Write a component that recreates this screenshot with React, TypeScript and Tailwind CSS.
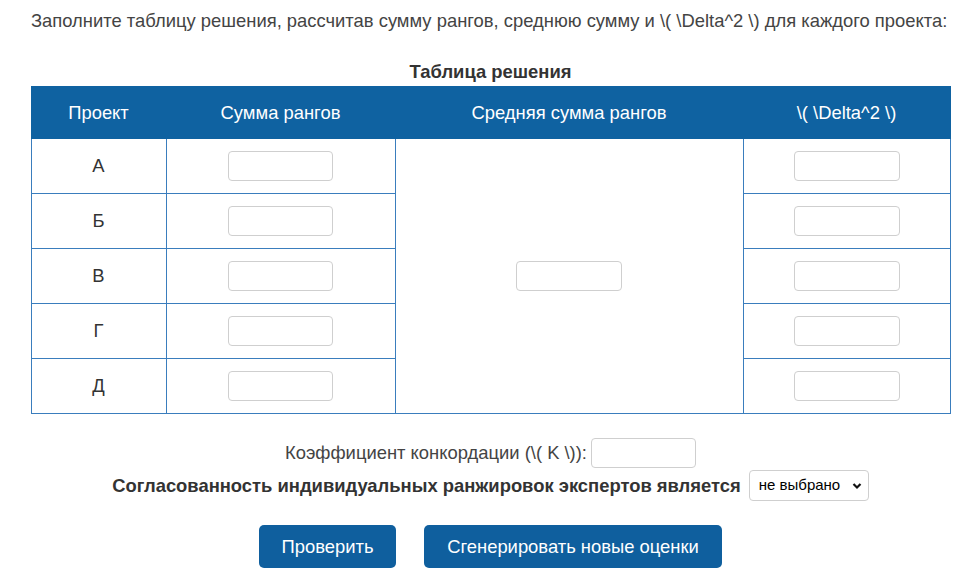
import React from "react";

const rows = ["А", "Б", "В", "Г", "Д"];

function Field({ w = "w-[105px]" }: { w?: string }) {
  return (
    <input
      type="text"
      className={`${w} h-[30px] rounded-[4px] border border-[#cfcfcf] bg-white outline-none`}
    />
  );
}

export default function App() {
  return (
    <div
      className="w-[974px] h-[584px] bg-white text-[#333] overflow-hidden text-[18.4px]"
      style={{ fontFamily: '"Liberation Sans", Arial, sans-serif' }}
    >
      <div className="ml-[31px] w-[919px] flex flex-col items-center">
        <p className="self-start mt-[11px] leading-[20px] text-[#444] whitespace-nowrap">
          Заполните таблицу решения, рассчитав сумму рангов, среднюю сумму и \( \Delta^2 \) для каждого проекта:
        </p>
        <div className="mt-[31px] leading-[20px] font-bold text-[#333]">Таблица решения</div>
        <table className="mt-[4px] w-[919px] border-collapse table-fixed">
          <colgroup>
            <col className="w-[135px]" />
            <col className="w-[229px]" />
            <col className="w-[348px]" />
            <col className="w-[207px]" />
          </colgroup>
          <thead>
            <tr className="h-[52px] bg-[#0f62a1] text-white">
              <th className="font-normal border border-[#0f62a1]">Проект</th>
              <th className="font-normal border border-[#0f62a1]">Сумма рангов</th>
              <th className="font-normal border border-[#0f62a1]">Средняя сумма рангов</th>
              <th className="font-normal border border-[#0f62a1]">\( \Delta^2 \)</th>
            </tr>
          </thead>
          <tbody>
            {rows.map((r, i) => (
              <tr key={r} className="h-[55px]">
                <td className="border border-[#3a7dbd] text-center text-[#333]">{r}</td>
                <td className="border border-[#3a7dbd] text-center align-middle">
                  <div className="flex justify-center">
                    <Field />
                  </div>
                </td>
                {i === 0 && (
                  <td rowSpan={5} className="border border-[#3a7dbd] align-middle">
                    <div className="flex justify-center">
                      <Field w="w-[106px]" />
                    </div>
                  </td>
                )}
                <td className="border border-[#3a7dbd] text-center align-middle">
                  <div className="flex justify-center">
                    <Field w="w-[106px]" />
                  </div>
                </td>
              </tr>
            ))}
          </tbody>
        </table>
        <div className="mt-[24px] flex items-center gap-[4px] text-[#444]">
          <span>Коэффициент конкордации (\( K \)):</span>
          <Field />
        </div>
        <div className="mt-[2px] flex items-center gap-[8px]">
          <span className="font-bold text-[#333]">Согласованность индивидуальных ранжировок экспертов является</span>
          <div className="relative w-[120px] h-[31px] rounded-[4px] border border-[#cfcfcf] bg-white flex items-center pl-[9px] text-[15px] text-black">
            <span>не выбрано</span>
            <svg className="absolute right-[6px] top-[11px]" width="10" height="8" viewBox="0 0 10 8">
              <path d="M1.5 2 L5 5.5 L8.5 2" fill="none" stroke="#111" strokeWidth="2.2" />
            </svg>
          </div>
        </div>
        <div className="mt-[24px] flex gap-[28px]">
          <button className="h-[43px] w-[137px] rounded-[5px] bg-[#0f5f9e] text-white">Проверить</button>
          <button className="h-[43px] w-[298px] rounded-[5px] bg-[#0f5f9e] text-white">Сгенерировать новые оценки</button>
        </div>
      </div>
    </div>
  );
}
